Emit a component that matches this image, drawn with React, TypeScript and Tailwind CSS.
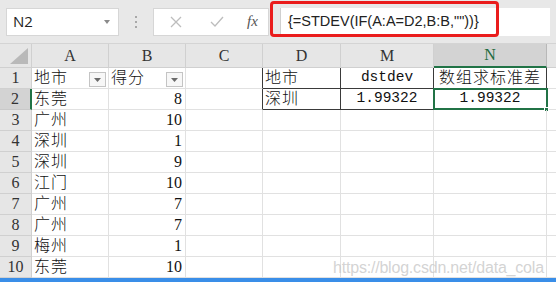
const COLS = ["A", "B", "C", "D", "M", "N"];

type Row = {
  a: string;
  b: string;
  d?: string;
  m?: string;
  n?: string;
};

const rows: Row[] = [
  { a: "地市", b: "得分", d: "地市", m: "dstdev", n: "数组求标准差" },
  { a: "东莞", b: "8", d: "深圳", m: "1.99322", n: "1.99322" },
  { a: "广州", b: "10" },
  { a: "深圳", b: "1" },
  { a: "深圳", b: "9" },
  { a: "江门", b: "10" },
  { a: "广州", b: "7" },
  { a: "广州", b: "7" },
  { a: "梅州", b: "1" },
  { a: "东莞", b: "10" },
];

const cjk = "font-['Liberation_Serif','Noto_Sans_CJK_SC',serif] font-light tracking-[1px]";
const mono = "font-['Liberation_Mono','Noto_Sans_CJK_SC',monospace]";

const FilterButton = () => (
  <span className="absolute right-[2px] top-[4px] flex h-[15px] w-[17px] items-center justify-center border border-[#c4c4c4] bg-[#f7f7f7]">
    <svg width="7" height="4" viewBox="0 0 7 4">
      <path d="M0 0 H7 L3.5 4 Z" fill="#6b6b6b" />
    </svg>
  </span>
);

const App = () => {
  return (
    <div className="relative h-[282px] w-[556px] overflow-hidden bg-white">
      {/* formula bar */}
      <div className="flex h-[44px] items-center border-b border-[#d4d4d4] bg-[#e8e8e8] pl-[6px]">
        <div className="flex h-[28px] w-[113px] items-center justify-between border border-[#d6d6d6] bg-white pl-[6px] pr-[8px] font-['Open_Sans',sans-serif] text-[15px] text-[#222]">
          <span>N2</span>
          <svg width="6" height="4" viewBox="0 0 6 4">
            <path d="M0 0 H6 L3 4 Z" fill="#8a8a8a" />
          </svg>
        </div>
        <div className="flex w-[34px] flex-col items-center gap-[3px]">
          <span className="h-[2px] w-[2px] bg-[#a8a8a8]" />
          <span className="h-[2px] w-[2px] bg-[#a8a8a8]" />
          <span className="h-[2px] w-[2px] bg-[#a8a8a8]" />
        </div>
        <div className="flex h-[28px] w-[116px] items-center border border-[#d6d6d6] bg-white">
          <svg className="ml-[16px]" width="12" height="12" viewBox="0 0 12 12">
            <path d="M1 1 L11 11 M11 1 L1 11" stroke="#bdbdbd" strokeWidth="1.3" />
          </svg>
          <svg className="ml-[28px]" width="14" height="11" viewBox="0 0 14 11">
            <path d="M1 6 L5 10 L13 1" stroke="#bdbdbd" strokeWidth="1.3" fill="none" />
          </svg>
          <span className="ml-[23px] font-['Liberation_Serif',serif] text-[15px] italic text-[#555]">fx</span>
        </div>
        <div className="ml-[11px] flex h-[28px] flex-1 items-center border-l border-[#cfcfcf] bg-white pl-[7px] font-['Liberation_Sans',sans-serif] text-[14.5px] text-[#222]">
          {'{=STDEV(IF(A:A=D2,B:B,""))}'}
        </div>
        <div className="w-[6px]" />
      </div>

      {/* red annotation box */}
      <div className="absolute left-[270px] top-[1px] h-[36px] w-[229px] rounded-[4px] border-[3px] border-[#ea1c1c]" />

      {/* sheet */}
      <div className="grid grid-cols-[32px_77px_77px_77px_78px_93px_113px_9px]">
        <div className="relative h-[24px] border-r border-b border-[#d0d0d0] bg-[#e6e6e6]">
          <svg className="absolute bottom-[3px] right-[3px]" width="18" height="16" viewBox="0 0 18 16">
            <path d="M18 0 V16 H0 Z" fill="#b9b9b9" />
          </svg>
        </div>
        {COLS.map((c) => (
          <div
            key={c}
            className={`flex h-[24px] items-center justify-center border-r font-['Liberation_Serif',serif] text-[16px] ${
              c === "N"
                ? "border-b-2 border-r-[#b8b8b8] border-b-[#217346] bg-[#d3d3d3] text-[#1e6b40]"
                : "border-b border-[#d0d0d0] bg-[#e6e6e6] text-[#333]"
            }`}
          >
            {c}
          </div>
        ))}
        <div className="h-[24px] border-b border-[#d0d0d0] bg-[#e6e6e6]" />

        {rows.map((r, i) => {
          const n = i + 1;
          const inTable = n <= 2;
          return (
            <div key={n} className="contents">
              <div
                className={`flex h-[21px] items-center justify-center border-b font-['Liberation_Serif',serif] text-[16px] text-[#333] ${
                  n === 2
                    ? "border-r-2 border-r-[#217346] border-b-[#c9c9c9] bg-[#d3d3d3]"
                    : "border-r border-[#d0d0d0] bg-[#e6e6e6]"
                }`}
              >
                {n}
              </div>
              <div className={`relative flex h-[21px] items-center border-r border-b border-[#e1e1e1] pl-[2px] ${cjk} text-[16px] text-[#111]`}>
                {r.a}
                {n === 1 && <FilterButton />}
              </div>
              <div
                className={`relative flex h-[21px] items-center border-r border-b border-[#e1e1e1] text-[16px] text-[#111] ${
                  n === 1 ? `pl-[2px] ${cjk}` : "justify-end pr-[3px] font-['Liberation_Serif',serif]"
                }`}
              >
                {r.b}
                {n === 1 && <FilterButton />}
              </div>
              <div
                className={`h-[21px] border-r border-b ${
                  inTable ? "border-r-[#3a3a3a] border-b-[#e1e1e1]" : "border-[#e1e1e1]"
                }`}
              />
              <div
                className={`flex h-[21px] items-center border-r border-b pl-[2px] ${cjk} text-[16px] text-[#111] ${
                  inTable ? "border-[#3a3a3a]" : "border-[#e1e1e1]"
                }`}
              >
                {r.d}
              </div>
              <div
                className={`flex h-[21px] items-center justify-center border-r border-b ${mono} text-[14.5px] text-[#111] ${
                  inTable ? "border-[#3a3a3a]" : "border-[#e1e1e1]"
                }`}
              >
                {r.m}
              </div>
              <div
                className={`relative flex h-[21px] items-center justify-center border-r border-b text-[#111] ${
                  n === 1 ? `${cjk} text-[16px]` : `${mono} text-[14.5px]`
                } ${inTable ? "border-[#3a3a3a]" : "border-[#e1e1e1]"}`}
              >
                {r.n}
                {n === 2 && (
                  <>
                    <span className="absolute -left-[1px] -top-[1px] h-[22px] w-[115px] border-2 border-[#217346]" />
                    <span className="absolute -bottom-[3px] -right-[3px] h-[5px] w-[5px] border border-white bg-[#217346]" />
                  </>
                )}
              </div>
              <div className="h-[21px] border-b border-[#e1e1e1]" />
            </div>
          );
        })}
      </div>

      <div className="h-[4px] bg-[#3a8ee8]" />

      {/* watermark */}
      <div className="pointer-events-none absolute left-[333px] top-[256px] font-['Liberation_Sans',sans-serif] text-[16px] tracking-[-0.2px] text-[#c8c8c8]/80">
        https://blog.csdn.net/data_cola
      </div>
    </div>
  );
};

export default App;
